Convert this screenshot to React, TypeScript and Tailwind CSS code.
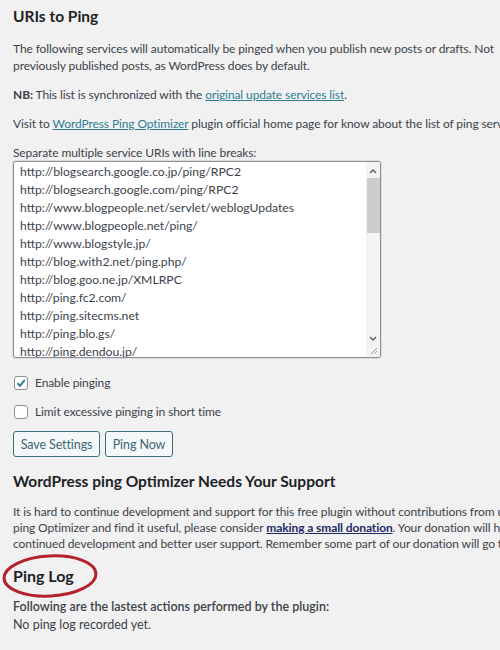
import React from "react";

const uris = [
  "http://blogsearch.google.co.jp/ping/RPC2",
  "http://blogsearch.google.com/ping/RPC2",
  "http://www.blogpeople.net/servlet/weblogUpdates",
  "http://www.blogpeople.net/ping/",
  "http://www.blogstyle.jp/",
  "http://blog.with2.net/ping.php/",
  "http://blog.goo.ne.jp/XMLRPC",
  "http://ping.fc2.com/",
  "http://ping.sitecms.net",
  "http://ping.blo.gs/",
  "http://ping.dendou.jp/",
];

export default function App() {
  return (
    <div
      className="w-[500px] h-[650px] overflow-hidden bg-[#f1f1f1] text-[#3c434a] text-[12px] tracking-[-0.1px] leading-[17px] relative"
      style={{ fontFamily: 'Lato, "Noto Sans", sans-serif' }}
    >
      <div className="pl-[13px] pt-[5px] whitespace-nowrap">
        <h2 className="text-[15.5px] leading-[22px] font-bold tracking-normal text-[#1d2327]">URIs to Ping</h2>
        <p className="mt-[13px]">
          The following services will automatically be pinged when you publish new posts or drafts. Not
          <br />
          previously published posts, as WordPress does by default.
        </p>
        <p className="mt-[12px]">
          <span className="font-bold">NB:</span> This list is synchronized with the{" "}
          <a className="text-[#2f7d95] underline">original update services list</a>.
        </p>
        <p className="mt-[12px]">
          Visit to <a className="text-[#2f7d95] underline">WordPress Ping Optimizer</a> plugin official home page for know about the list of ping services
        </p>
        <p className="mt-[12px]">Separate multiple service URIs with line breaks:</p>

        <div className="w-[368px] h-[197px] border border-[#8c8f94] rounded-[3px] bg-white flex overflow-hidden shadow-[0_0_0_1px_#dcdcde]">
          <div className="flex-1 pl-[6px] pt-[1px] text-[12.2px] tracking-normal leading-[18px] text-[#3c434a] overflow-hidden">
            {uris.map((u) => (
              <div key={u}>{u}</div>
            ))}
          </div>
          <div className="w-[14px] bg-[#f3f3f3] flex flex-col items-center relative">
            <svg width="8" height="6" viewBox="0 0 8 6" className="mt-[6px]">
              <path d="M1 5 L4 2 L7 5" fill="none" stroke="#606060" strokeWidth="1.5" />
            </svg>
            <div className="w-[13px] h-[55px] bg-[#cdcdcd] mt-[4px]" />
            <div className="flex-1" />
            <svg width="8" height="6" viewBox="0 0 8 6" className="mb-[15px]">
              <path d="M1 1 L4 4 L7 1" fill="none" stroke="#606060" strokeWidth="1.5" />
            </svg>
            <svg width="8" height="8" viewBox="0 0 8 8" className="absolute bottom-[2px] right-[2px]">
              <path d="M7 1 L1 7 M7 4 L4 7" fill="none" stroke="#a0a0a0" strokeWidth="1" />
            </svg>
          </div>
        </div>

        <div className="mt-[16px] h-[17px] flex items-center gap-[7px] pl-[1px]">
          <div className="w-[14px] h-[14px] border border-[#8c8f94] rounded-[3px] bg-white flex items-center justify-center">
            <svg width="12" height="12" viewBox="0 0 12 12">
              <path d="M2.5 6.2 L5 8.8 L9.8 2.8" fill="none" stroke="#2f7d95" strokeWidth="2" />
            </svg>
          </div>
          <span>Enable pinging</span>
        </div>
        <div className="mt-[12px] h-[17px] flex items-center gap-[7px] pl-[1px]">
          <div className="w-[14px] h-[14px] border border-[#8c8f94] rounded-[3px] bg-white" />
          <span>Limit excessive pinging in short time</span>
        </div>

        <div className="mt-[11px] flex gap-[5px]">
          <button className="h-[26px] w-[87px] border border-[#3f6d7c] rounded-[3px] bg-[#f5f8f8] text-[#3b6676] text-[12.5px]">
            Save Settings
          </button>
          <button className="h-[26px] w-[68px] border border-[#3f6d7c] rounded-[3px] bg-[#f5f8f8] text-[#3b6676] text-[12.5px]">
            Ping Now
          </button>
        </div>

        <h2 className="mt-[13px] text-[15.5px] leading-[22px] font-bold tracking-normal text-[#1d2327]">
          WordPress ping Optimizer Needs Your Support
        </h2>
        <p className="mt-[12px] leading-[16px]">
          It is hard to continue development and support for this free plugin without contributions from users like you. If you enjoy using WordPress
          <br />
          ping Optimizer and find it useful, please consider{" "}
          <a className="font-bold text-[#1f2a66] underline">making a small donation</a>. Your donation will help encourage and support the plugin's
          <br />
          continued development and better user support. Remember some part of our donation will go to charity.
        </p>

        <h2 className="mt-[13px] text-[16px] leading-[22px] font-bold tracking-normal text-[#1d2327]">Ping Log</h2>
        <p className="mt-[11px] font-semibold text-[12.5px] tracking-normal">Following are the lastest actions performed by the plugin:</p>
        <p className="mt-[1px] text-[12.5px] tracking-normal">No ping log recorded yet.</p>
      </div>

      <svg className="absolute left-0 top-[550px]" width="105" height="55" viewBox="0 0 105 55">
        <ellipse cx="50" cy="26" rx="46" ry="20" fill="none" stroke="#b3222c" strokeWidth="3" transform="rotate(-3 50 26)" />
      </svg>
    </div>
  );
}
